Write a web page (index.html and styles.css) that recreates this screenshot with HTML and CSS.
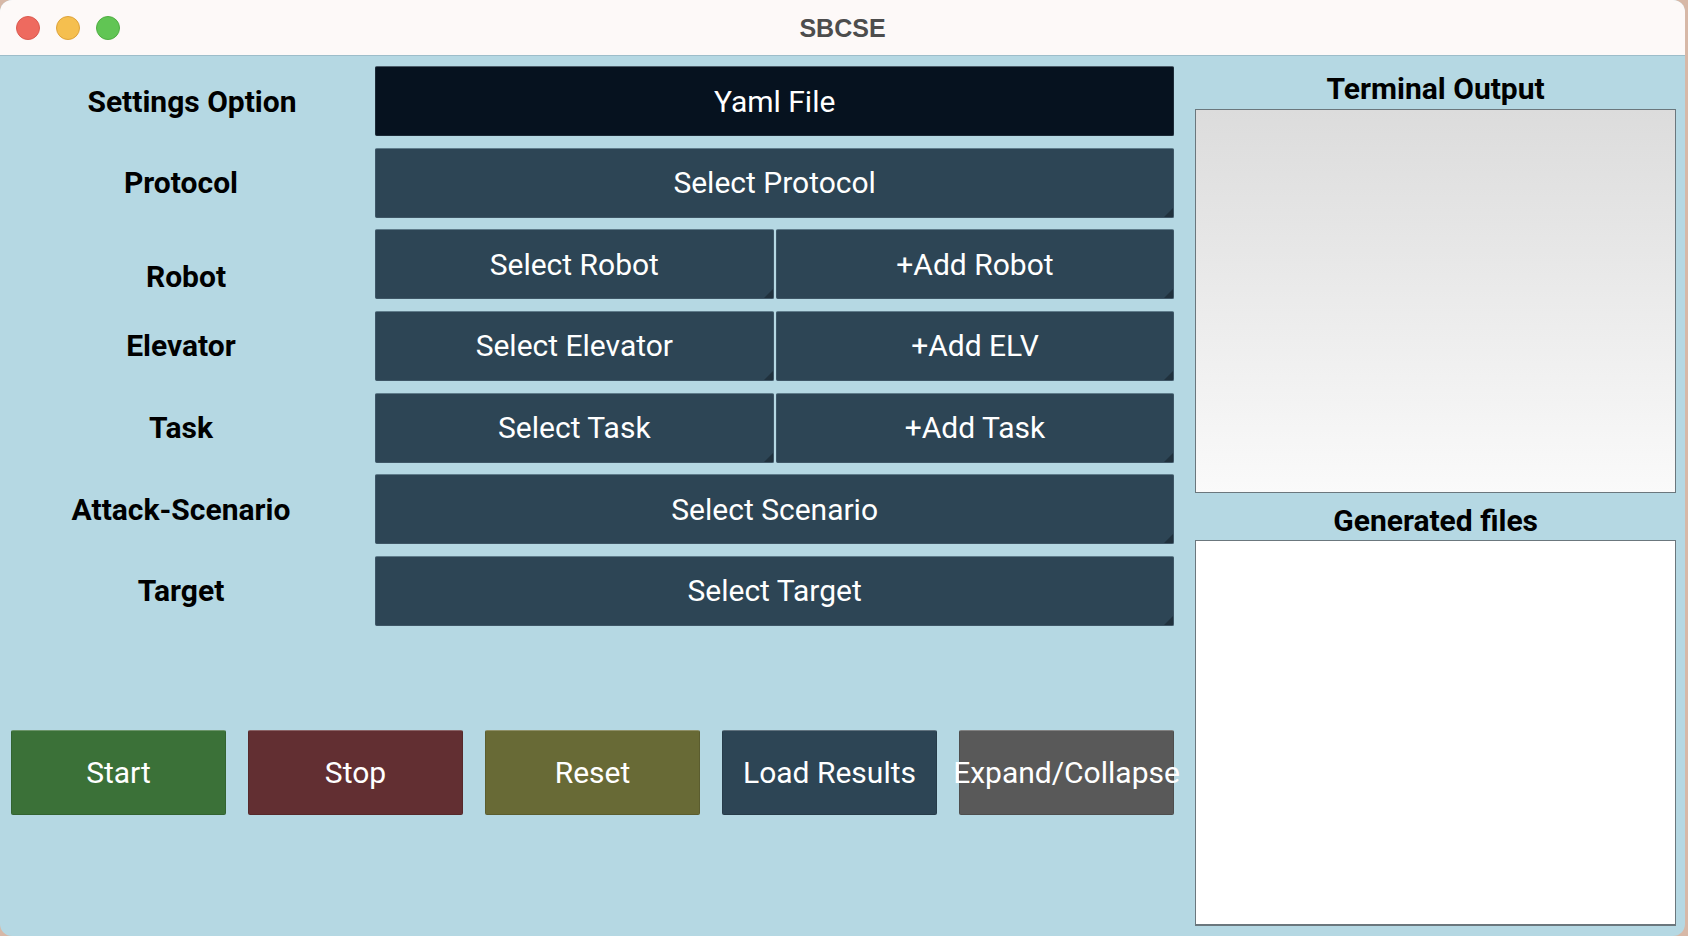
FILE: index.html
```html
<!DOCTYPE html>
<html lang="en">
<head>
<meta charset="utf-8">
<title>SBCSE</title>
<link rel="stylesheet" href="styles.css">
</head>
<body>
<div class="window">
  <header class="titlebar">
    <div class="lights">
      <span class="light red"></span>
      <span class="light yellow"></span>
      <span class="light green"></span>
    </div>
    <div class="title">SBCSE</div>
  </header>
  <main class="content">
    <section class="left">
      <div class="form">
        <div class="label label-settings">Settings Option</div>
        <button class="btn btn-dark">Yaml File</button>

        <div class="label">Protocol</div>
        <button class="btn">Select Protocol</button>

        <div class="label label-robot">Robot</div>
        <div class="split">
          <button class="btn">Select Robot</button>
          <button class="btn">+Add Robot</button>
        </div>

        <div class="label">Elevator</div>
        <div class="split">
          <button class="btn">Select Elevator</button>
          <button class="btn">+Add ELV</button>
        </div>

        <div class="label">Task</div>
        <div class="split">
          <button class="btn">Select Task</button>
          <button class="btn">+Add Task</button>
        </div>

        <div class="label">Attack-Scenario</div>
        <button class="btn">Select Scenario</button>

        <div class="label">Target</div>
        <button class="btn">Select Target</button>
      </div>
      <div class="actions">
        <button class="act act-start">Start</button>
        <button class="act act-stop">Stop</button>
        <button class="act act-reset">Reset</button>
        <button class="act act-load">Load Results</button>
        <button class="act act-expand">Expand/Collapse</button>
      </div>
    </section>
    <aside class="right">
      <h2 class="panel-title">Terminal Output</h2>
      <div class="terminal"></div>
      <h2 class="panel-title panel-title-gen">Generated files</h2>
      <div class="files"></div>
    </aside>
  </main>
</div>
</body>
</html>
```

FILE: styles.css
```css
* { box-sizing: border-box; }

html, body {
  margin: 0;
  padding: 0;
  width: 1688px;
  height: 936px;
  overflow: hidden;
  background: #d7b8a7;
}

.window {
  width: 1685px;
  height: 936px;
  border-radius: 12px;
  overflow: hidden;
  background: #b5d8e3;
  display: flex;
  flex-direction: column;
  font-family: Roboto, "Noto Sans", sans-serif;
}

/* Title bar */
.titlebar {
  height: 56px;
  flex: none;
  background: #fdf9f8;
  border-bottom: 1px solid #9dbdca;
  display: flex;
  align-items: center;
}

.lights {
  display: flex;
  gap: 16px;
  padding-left: 16px;
  margin-top: 1px;
  width: 120px;
  flex: none;
}

.light {
  width: 24px;
  height: 24px;
  border-radius: 50%;
  display: block;
}
.red { background: #ee6a5f; border: 1px solid #db5a50; }
.yellow { background: #f5bf4f; border: 1px solid #dea33a; }
.green { background: #61c554; border: 1px solid #4fae42; }

.title {
  flex: 1;
  text-align: center;
  margin-left: -120px;
  font-family: "Liberation Sans", Arial, sans-serif;
  font-weight: 700;
  font-size: 25px;
  color: #4d4d4d;
  padding-top: 1px;
}

/* Content */
.content {
  flex: 1;
  display: flex;
  padding: 10px 9px 10px 11px;
}

.left {
  width: 1164px;
  display: flex;
  flex-direction: column;
}

.form {
  display: grid;
  grid-template-columns: 340px 1fr;
  grid-auto-rows: 70px;
  column-gap: 24px;
  row-gap: 11.67px;
}

.label {
  display: flex;
  align-items: center;
  justify-content: center;
  font-weight: 700;
  font-size: 30px;
  color: #000;
}
.label-settings { padding-left: 22px; padding-top: 1px; }
.label-robot { padding-left: 10px; padding-top: 24px; }

.split {
  display: grid;
  grid-template-columns: 1fr 1fr;
  column-gap: 2px;
}

.btn, .act {
  position: relative;
  margin: 0;
  font-family: Roboto, "Noto Sans", sans-serif;
  font-size: 30px;
  font-weight: 400;
  color: #ffffff;
  display: flex;
  align-items: center;
  justify-content: center;
  white-space: nowrap;
  cursor: pointer;
  border-radius: 2px;
}

.btn {
  background: #2d4555;
  border: 1px solid #3e5666;
  border-top-color: #5f7c8b;
}
.btn::after {
  content: "";
  position: absolute;
  right: 0;
  bottom: 0;
  width: 0;
  height: 0;
  border-style: solid;
  border-width: 0 0 9px 9px;
  border-color: transparent transparent rgba(0, 0, 0, 0.28) transparent;
}

.btn-dark {
  background: #06121f;
  border-color: #1c2a37;
  border-top-color: #4c5c69;
}
.btn-dark::after { display: none; }

.actions {
  margin-top: 104px;
  display: grid;
  grid-template-columns: repeat(5, 215px);
  column-gap: 22px;
}

.act {
  height: 85px;
  border: 1px solid rgba(0, 0, 0, 0.12);
  border-top-color: rgba(255, 255, 255, 0.25);
}
.act-start { background: #3b7138; }
.act-stop { background: #622f32; }
.act-reset { background: #686a36; }
.act-load { background: #2d4555; }
.act-expand { background: #595959; }

/* Right panel */
.right {
  width: 481px;
  margin-left: 21px;
  display: flex;
  flex-direction: column;
  padding-top: 6px;
}

.panel-title {
  margin: 0 0 4px 0;
  height: 33px;
  line-height: 33px;
  text-align: center;
  font-size: 30px;
  font-weight: 700;
  color: #000;
}
.panel-title-gen {
  margin-top: 11px;
  margin-bottom: 3px;
}

.terminal {
  height: 384px;
  border: 1px solid #6b777d;
  background: linear-gradient(to bottom, #dcdcdc 0%, #fafafa 100%);
}

.files {
  height: 386px;
  border: 1px solid #6b777d;
  border-bottom-width: 2px;
  background: #ffffff;
}
```
